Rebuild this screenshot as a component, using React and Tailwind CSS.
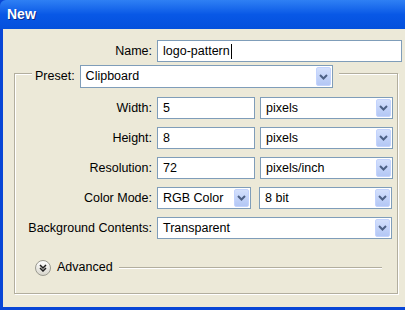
import React from 'react'

const font = { fontFamily: '"Liberation Sans", Arial, sans-serif' }

function Chevron() {
  return (
    <svg width="9" height="6" viewBox="0 0 9 6">
      <path d="M1 1 L4.5 4.5 L8 1" fill="none" stroke="#4d6185" strokeWidth="2" />
    </svg>
  )
}

function DropButton() {
  return (
    <div className="flex items-center justify-center w-[15px] self-stretch m-[1px] rounded-[2px] border border-[#c3d3fd] bg-gradient-to-b from-[#d4e0fc] to-[#b3c7f5]">
      <Chevron />
    </div>
  )
}

function Select({ value, className }) {
  return (
    <div className={`flex items-stretch bg-white border border-[#7f9db9] ${className}`}>
      <div className="flex-1 flex items-center pl-[5px] text-[12.5px] text-black">{value}</div>
      <DropButton />
    </div>
  )
}

function Field({ value, className, caret }) {
  return (
    <div className={`flex items-center bg-white border border-[#7f9db9] pl-[5px] text-[12.5px] text-black ${className}`}>
      {value}
      {caret && <span className="w-[1px] h-[15px] bg-black ml-[1px]" />}
    </div>
  )
}

function Row({ label, children }) {
  return (
    <div className="flex items-center h-[22px]">
      <div className="w-[138px] text-right text-[12.5px] text-black pr-[1px]">{label}</div>
      <div className="flex h-full ml-[4px] gap-[5px]">{children}</div>
    </div>
  )
}

export default function App() {
  return (
    <div className="w-[405px] h-[310px] bg-[#0846d6] overflow-hidden flex flex-col" style={font}>
      {/* title bar */}
      <div className="h-[29px] shrink-0 rounded-tl-[6px] bg-gradient-to-b from-[#2f80f4] via-[#0858e6] to-[#0450dc] flex items-center pl-[7px]">
        <span className="text-white font-bold text-[14px] [text-shadow:1px_1px_0_#0a2a8a]">New</span>
      </div>

      {/* body */}
      <div className="ml-[3px] h-[278px] bg-[#ece9d8] pt-[11px]">
        <div className="flex items-center h-[22px]">
          <div className="w-[150px] text-right text-[12.5px] text-black pr-[1px]">Name:</div>
          <Field value="logo-pattern" caret className="ml-[4px] w-[245px] h-full" />
        </div>

        <div className="mt-[11px] ml-[11px] w-[384px] h-[221px] border border-[#b2ae9e] shadow-[inset_1px_1px_0_#fff,1px_1px_0_#fff]">
          {/* legend */}
          <div className="-mt-[9px] ml-[17px] flex items-center h-[23px] w-fit bg-[#ece9d8] px-[3px] pr-[6px]">
            <span className="text-[12.5px] text-black mr-[5px]">Preset:</span>
            <Select value="Clipboard" className="w-[253px] h-full" />
          </div>

          <div className="mt-[9px] flex flex-col gap-[8px]">
            <Row label="Width:">
              <Field value="5" className="w-[98px]" />
              <Select value="pixels" className="w-[133px]" />
            </Row>
            <Row label="Height:">
              <Field value="8" className="w-[98px]" />
              <Select value="pixels" className="w-[133px]" />
            </Row>
            <Row label="Resolution:">
              <Field value="72" className="w-[98px]" />
              <Select value="pixels/inch" className="w-[133px]" />
            </Row>
            <Row label="Color Mode:">
              <Select value="RGB Color" className="w-[94px]" />
              <div className="w-[4px] -ml-[1px]" />
              <Select value="8 bit" className="w-[133px] -ml-[5px]" />
            </Row>
            <Row label="Background Contents:">
              <Select value="Transparent" className="w-[235px]" />
            </Row>
          </div>

          {/* advanced */}
          <div className="mt-[20px] ml-[20px] flex items-center h-[17px]">
            <div className="w-[16px] h-[16px] rounded-full border border-[#9a9a90] bg-gradient-to-b from-white to-[#d8d6cc] flex items-center justify-center">
              <svg width="8" height="8" viewBox="0 0 8 8">
                <path d="M1 1 L4 4 L7 1 M1 4 L4 7 L7 4" fill="none" stroke="#202020" strokeWidth="1.5" />
              </svg>
            </div>
            <span className="ml-[6px] text-[12.5px] text-black">Advanced</span>
            <div className="ml-[6px] flex-1 mr-[15px] h-[1px] bg-[#b2ae9e] shadow-[0_1px_0_#fff]" />
          </div>
        </div>
      </div>
    </div>
  )
}
